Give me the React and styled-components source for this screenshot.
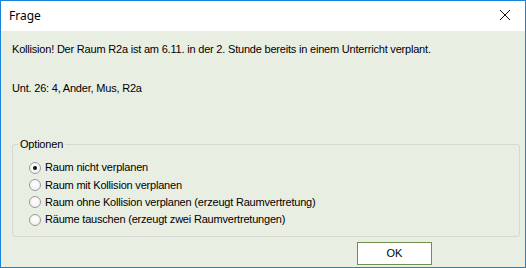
import React from "react";
import styled, { createGlobalStyle } from "styled-components";

const Global = createGlobalStyle`
  html, body { margin: 0; padding: 0; background: #ffffff; }
  body { width: 526px; height: 268px; overflow: hidden; }
`;

const Window = styled.div`
  box-sizing: border-box;
  width: 526px;
  height: 268px;
  border: 1px solid #1883d7;
  display: flex;
  flex-direction: column;
  font-family: "Liberation Sans", Arial, sans-serif;
  color: #000;
`;

const TitleBar = styled.div`
  height: 30px;
  flex: none;
  background: #fff;
  display: flex;
  align-items: center;
  justify-content: space-between;
  padding: 0 10px 0 8px;
`;

const Title = styled.span`
  font-family: "Noto Sans", "Open Sans", sans-serif;
  font-size: 12px;
  color: #000;
  margin-top: -1px;
`;

const CloseBtn = styled.div`
  width: 12px;
  height: 12px;
  display: flex;
  margin-right: 4px;
  margin-top: -2px;
`;

const Body = styled.div`
  flex: 1;
  background: #e9eee3;
  display: flex;
  flex-direction: column;
  padding: 12px 5px 0 11px;
  font-size: 11px;
  letter-spacing: -0.2px;
`;

const Line = styled.div`
  height: 13px;
  line-height: 13px;
  margin-bottom: ${(p) => p.$gap || 0}px;
  white-space: nowrap;
`;

const Group = styled.fieldset`
  margin: 0;
  border: 1px solid #d5d9d1;
  border-radius: 3px;
  padding: 10px 0 9px 16px;
  width: 508px;
  box-sizing: border-box;
  display: flex;
  flex-direction: column;
  gap: 4px;
`;

const Legend = styled.legend`
  padding: 0 2px;
  margin-left: -11px;
  font-size: 11px;
  line-height: 13px;
`;

const Option = styled.label`
  display: flex;
  align-items: center;
  gap: 4px;
  height: 13.4px;
  line-height: 13px;
  white-space: nowrap;
`;

const Radio = styled.span`
  box-sizing: border-box;
  width: 12px;
  height: 12px;
  border-radius: 50%;
  border: 1px solid #9a9a9a;
  background: radial-gradient(circle at 50% 40%, #ffffff 0%, #f2f2f2 70%, #e6e6e6 100%);
  display: flex;
  align-items: center;
  justify-content: center;
  &::after {
    content: "";
    width: 4px;
    height: 4px;
    border-radius: 50%;
    background: #111;
    display: ${(p) => (p.$checked ? "block" : "none")};
  }
`;

const Footer = styled.div`
  display: flex;
  justify-content: flex-start;
  padding-left: 345px;
  margin-top: 5px;
`;

const OkButton = styled.button`
  box-sizing: border-box;
  width: 75px;
  height: 23px;
  background: #fff;
  border: 1px solid #6e8f4e;
  font-family: "Liberation Sans", Arial, sans-serif;
  font-size: 11px;
  color: #000;
  padding: 0;
`;

const options = [
  { label: "Raum nicht verplanen", checked: true },
  { label: "Raum mit Kollision verplanen" },
  { label: "Raum ohne Kollision verplanen (erzeugt Raumvertretung)" },
  { label: "Räume tauschen (erzeugt zwei Raumvertretungen)" },
];

export default function App() {
  return (
    <>
      <Global />
      <Window>
        <TitleBar>
          <Title>Frage</Title>
          <CloseBtn>
            <svg width="12" height="12" viewBox="0 0 12 12">
              <path d="M1 1 L11 11 M11 1 L1 11" stroke="#111" strokeWidth="1" />
            </svg>
          </CloseBtn>
        </TitleBar>
        <Body>
          <Line $gap={26}>
            Kollision! Der Raum R2a ist am 6.11. in der 2. Stunde bereits in einem Unterricht verplant.
          </Line>
          <Line $gap={43}>Unt. 26: 4, Ander, Mus, R2a</Line>
          <Group>
            <Legend>Optionen</Legend>
            {options.map((o) => (
              <Option key={o.label}>
                <Radio $checked={o.checked} />
                {o.label}
              </Option>
            ))}
          </Group>
          <Footer>
            <OkButton>OK</OkButton>
          </Footer>
        </Body>
      </Window>
    </>
  );
}
